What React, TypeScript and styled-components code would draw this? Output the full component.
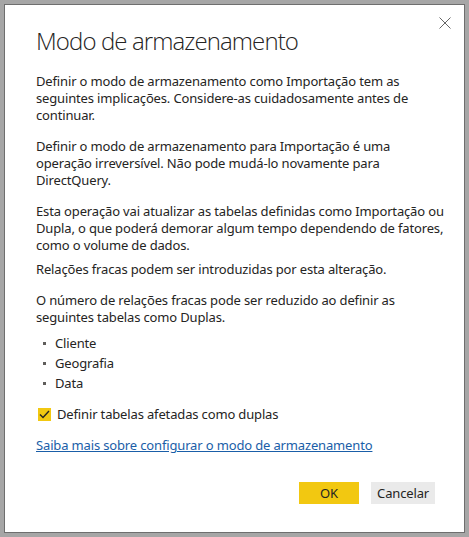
import { createGlobalStyle, styled } from "styled-components";

const GlobalStyle = createGlobalStyle`
  html, body {
    margin: 0;
    padding: 0;
    background: #a6a6a6;
  }
  body {
    font-family: "Segoe UI", "Noto Sans", "Open Sans", sans-serif;
    color: #252423;
    letter-spacing: -0.15px;
  }
`;

const Frame = styled.div`
  box-sizing: border-box;
  width: 469px;
  height: 537px;
  padding: 4px;
`;

const Dialog = styled.div`
  box-sizing: border-box;
  position: relative;
  height: 100%;
  background: #ffffff;
  border: 1px solid #6e6e6e;
  padding: 20px 22px 0 31px;
  display: flex;
  flex-direction: column;
`;

const Close = styled.button`
  position: absolute;
  top: 8px;
  right: 9px;
  width: 20px;
  height: 20px;
  padding: 0;
  border: 0;
  background: transparent;
  display: flex;
  align-items: center;
  justify-content: center;
`;

const Title = styled.h1`
  margin: 0 0 16px 0;
  font-family: "Open Sans", "Noto Sans", sans-serif;
  font-weight: 300;
  font-size: 24px;
  line-height: 32px;
  letter-spacing: -0.9px;
  color: #252423;
`;

const Para = styled.p<{ $gap?: number }>`
  margin: 0 0 ${(p) => p.$gap ?? 14}px 0;
  font-size: 13px;
  line-height: 17px;
  white-space: nowrap;
`;

const List = styled.ul`
  margin: -6px 0 14px 0;
  padding: 0;
  list-style: none;
  display: flex;
  flex-direction: column;
  gap: 2px;
`;

const Item = styled.li`
  display: flex;
  align-items: center;
  font-size: 13px;
  line-height: 18px;
  &::before {
    content: "";
    width: 3px;
    height: 3px;
    background: #605e5c;
    margin: 0 9px 0 7px;
  }
`;

const CheckRow = styled.label`
  display: flex;
  align-items: center;
  gap: 6px;
  font-size: 13px;
  line-height: 17px;
  margin-bottom: 14px;
`;

const Box = styled.span`
  width: 13px;
  height: 13px;
  background: #f2c811;
  display: flex;
  align-items: center;
  justify-content: center;
  margin-left: 2px;
`;

const LinkRow = styled.div`
  font-size: 13px;
  line-height: 17px;
`;

const Link = styled.a`
  color: #1a5ea8;
  text-decoration: underline;
`;

const Footer = styled.div`
  margin-top: auto;
  display: flex;
  justify-content: flex-end;
  gap: 12px;
  padding: 0 7px 28px 0;
`;

const Button = styled.button<{ $primary?: boolean }>`
  height: 22px;
  min-width: 60px;
  padding: 0 6px;
  border: 0;
  font-family: inherit;
  font-size: 13px;
  letter-spacing: inherit;
  color: #252423;
  background: ${(p) => (p.$primary ? "#f2c811" : "#eaeaea")};
`;

export default function App() {
  return (
    <>
      <GlobalStyle />
      <Frame>
        <Dialog>
          <Close aria-label="Fechar">
            <svg width="12" height="12" viewBox="0 0 12 12">
              <path d="M0.5 0.5 L11.5 11.5 M11.5 0.5 L0.5 11.5" stroke="#666" strokeWidth="1" fill="none" />
            </svg>
          </Close>
          <Title>Modo de armazenamento</Title>
          <Para>
            Definir o modo de armazenamento como Importação tem as
            <br />
            seguintes implicações. Considere-as cuidadosamente antes de
            <br />
            continuar.
          </Para>
          <Para>
            Definir o modo de armazenamento para Importação é uma
            <br />
            operação irreversível. Não pode mudá-lo novamente para
            <br />
            DirectQuery.
          </Para>
          <Para $gap={7}>
            Esta operação vai atualizar as tabelas definidas como Importação ou
            <br />
            Dupla, o que poderá demorar algum tempo dependendo de fatores,
            <br />
            como o volume de dados.
          </Para>
          <Para>Relações fracas podem ser introduzidas por esta alteração.</Para>
          <Para>
            O número de relações fracas pode ser reduzido ao definir as
            <br />
            seguintes tabelas como Duplas.
          </Para>
          <List>
            <Item>Cliente</Item>
            <Item>Geografia</Item>
            <Item>Data</Item>
          </List>
          <CheckRow>
            <Box>
              <svg width="11" height="9" viewBox="0 0 11 9">
                <path d="M1 4.5 L4 7.5 L10 1" stroke="#252423" strokeWidth="1.4" fill="none" />
              </svg>
            </Box>
            Definir tabelas afetadas como duplas
          </CheckRow>
          <LinkRow>
            <Link href="#">Saiba mais sobre configurar o modo de armazenamento</Link>
          </LinkRow>
          <Footer>
            <Button $primary>OK</Button>
            <Button>Cancelar</Button>
          </Footer>
        </Dialog>
      </Frame>
    </>
  );
}
